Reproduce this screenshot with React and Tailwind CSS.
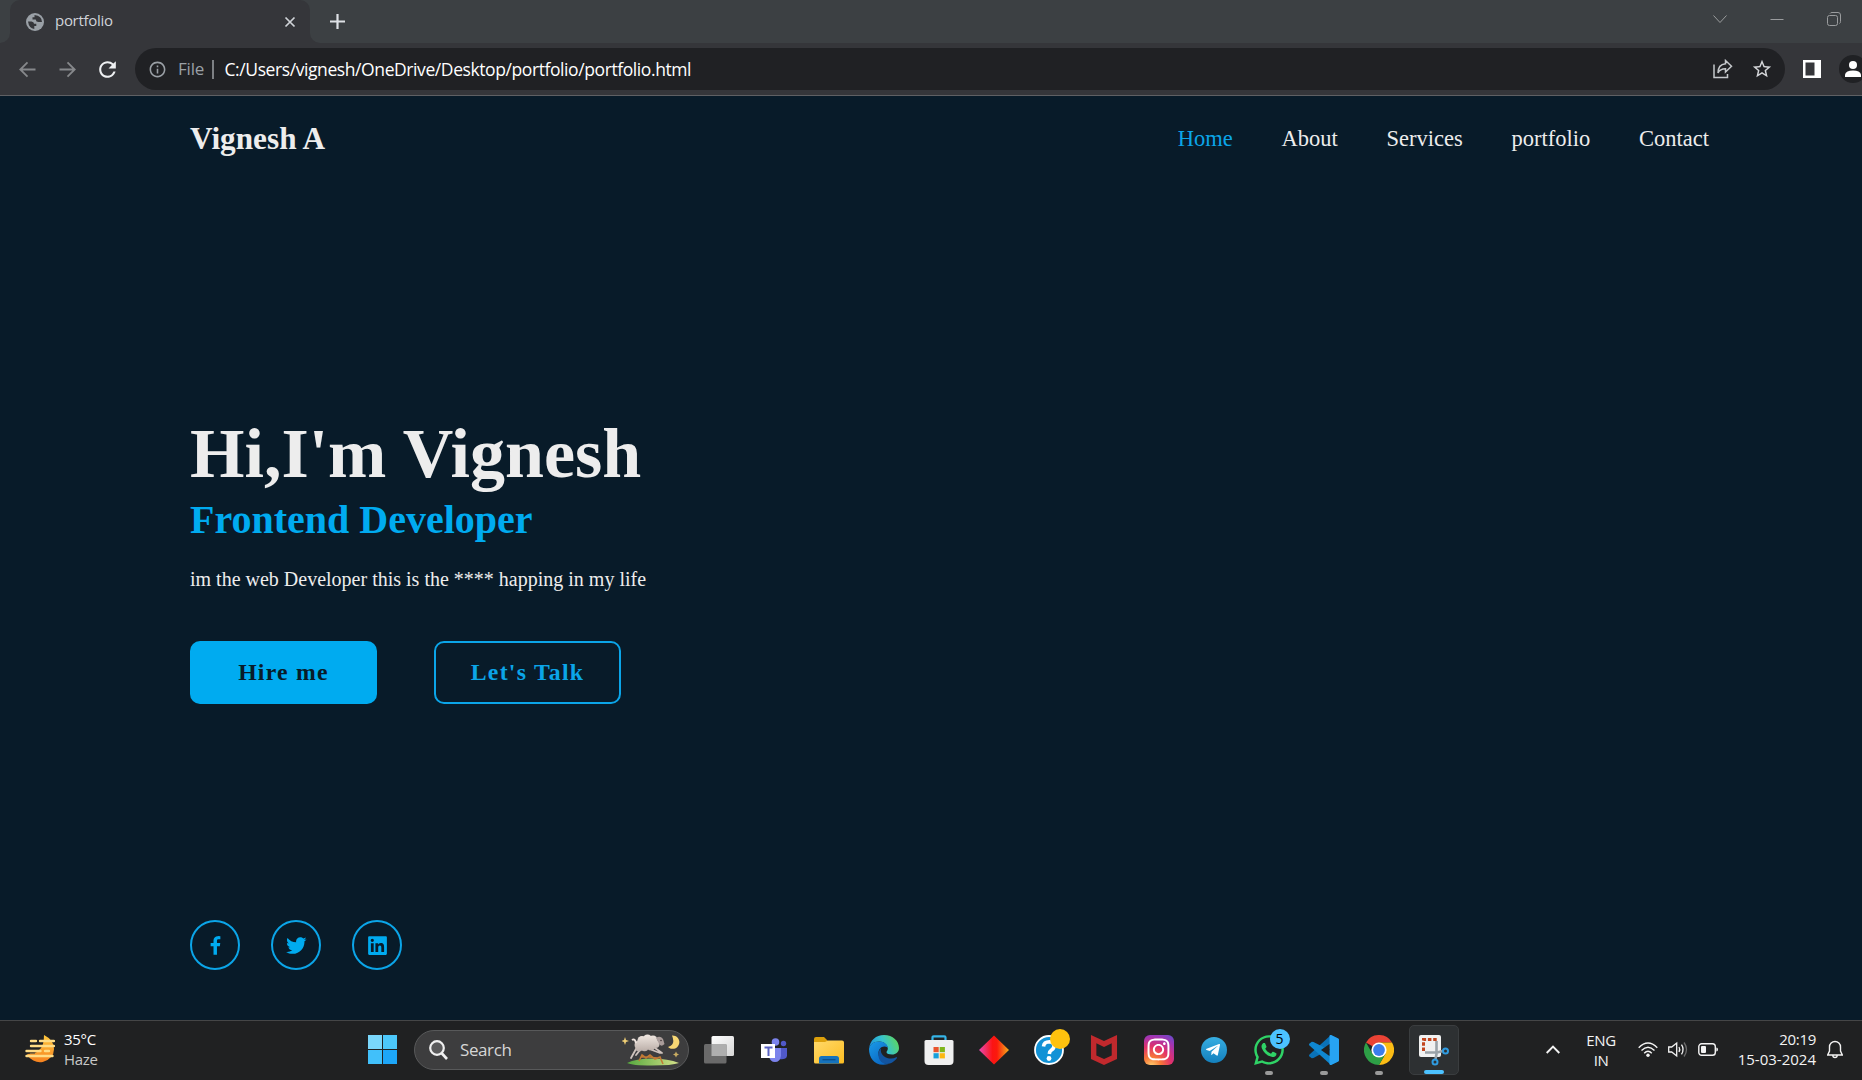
import React from "react";
import { BiLogoFacebook, BiLogoTwitter, BiLogoLinkedinSquare } from "react-icons/bi";
import { MdInfoOutline, MdRefresh, MdStarBorder } from "react-icons/md";
import { SiMcafee } from "react-icons/si";
import { FaInstagram, FaTelegramPlane, FaWhatsapp } from "react-icons/fa";

function Flare({ flip }) {
  return (
    <svg width="10" height="10" viewBox="0 0 10 10" className={flip ? "self-end -scale-x-100" : "self-end"}>
      <path d="M10 0V10H0A10 10 0 0 0 10 0Z" fill="#35363a" />
    </svg>
  );
}

function Globe() {
  return (
    <svg width="18" height="18" viewBox="0 0 18 18">
      <circle cx="9" cy="9" r="9" fill="#9aa0a6" />
      <path d="M2 8.500h3.500q2.500.2 2.500 2.300h2.300v2.200h-2v3Q3 15.500 2 8.500Z" fill="#35363a" />
      <path d="M8.500 2v2.200H6.500v2.300h3.200q.3 2.500 2.800 2.500h3.500Q16 3 8.500 2Z" fill="#35363a" />
    </svg>
  );
}

function TabStrip() {
  return (
    <div className="flex h-[43px] bg-[#3c4043]">
      <Flare />
      <div className="flex w-[300px] items-center rounded-t-[10px] bg-[#35363a] pr-[14px] pl-[16px]">
        <Globe />
        <span className="-mt-[2px] ml-[11px] text-[15px] tracking-[-0.3px] text-[#d0d3d8]">portfolio</span>
        <svg className="ml-auto" width="12" height="12" viewBox="0 0 12 12" stroke="#d0d3d8" strokeWidth="1.7">
          <path d="M1.5 1.5l9 9M10.5 1.5l-9 9" />
        </svg>
      </div>
      <Flare flip />
      <svg className="mt-[13px] ml-[9px]" width="17" height="17" viewBox="0 0 17 17" stroke="#dee1e6" strokeWidth="2.2">
        <path d="M8.5 1v15M1 8.5h15" />
      </svg>
      <div className="mr-[21px] ml-auto flex h-[37px] items-center gap-[43px]">
        <svg width="14" height="14" viewBox="0 0 14 14" fill="none" stroke="#9a9c9e">
          <path d="M0.5 3.5l6.5 7 6.5-7" />
        </svg>
        <svg width="14" height="14" viewBox="0 0 14 14" fill="none" stroke="#9a9c9e">
          <path d="M0.5 7.5h13" />
        </svg>
        <svg width="14" height="14" viewBox="0 0 14 14" fill="none" stroke="#9a9c9e">
          <rect x="0.5" y="3.5" width="10" height="10" rx="2" />
          <path d="M3 1.5Q3.500 .5 5 .5H11Q13.500 .5 13.500 3V9.500Q13.500 11 12.500 11.500" />
        </svg>
      </div>
    </div>
  );
}

function Toolbar() {
  return (
    <div className="flex h-[53px] items-center overflow-hidden border-b border-[#5f6063] bg-[#35363a]">
      <svg className="ml-[19px] shrink-0" width="17" height="17" viewBox="0 0 17 17" fill="none" stroke="#86888b" strokeWidth="1.8">
        <path d="M16.500 8.500H1.500M8.500 1.300L1.300 8.500l7.200 7.200" />
      </svg>
      <svg className="ml-[23px] shrink-0" width="17" height="17" viewBox="0 0 17 17" fill="none" stroke="#86888b" strokeWidth="1.8">
        <path d="M.5 8.500h15M8.500 1.300l7.200 7.200-7.200 7.200" />
      </svg>
      <MdRefresh className="ml-[19px] size-[25px] shrink-0 text-[#eef0f2]" />
      <div className="ml-[15px] flex h-[42px] w-[1650px] shrink-0 items-center rounded-full bg-[#202124]">
        <MdInfoOutline className="ml-[13px] size-[19px] text-[#9aa0a6]" />
        <span className="ml-[11px] w-[26px] text-[17px] tracking-[-0.2px] text-[#9aa0a6]">File</span>
        <div className="ml-[8px] h-[19px] w-[1.500px] bg-[#7d8084]" />
        <span className="ml-[11px] text-[17.500px] tracking-[-0.41px] whitespace-nowrap text-white">
          C:/Users/vignesh/OneDrive/Desktop/portfolio/portfolio.html
        </span>
        <svg className="ml-auto" width="20" height="20" viewBox="0 0 20 20" fill="none" stroke="#c4c7ca" strokeWidth="1.500">
          <path d="M1 5.500V18.500H14.500V15M12.500 1.500L18.500 7.200L12.500 13V9.800Q7 9.800 5 14Q5 5.500 12.500 4.800Z" />
        </svg>
        <MdStarBorder className="mr-[12px] ml-[18px] size-[22px] text-[#d5d7da]" />
      </div>
      <svg className="ml-[18px] shrink-0" width="18" height="18" viewBox="0 0 18 18">
        <path d="M0 0H18V18H0ZM2.500 2.500V15.500H11.500V2.500Z" fill="#fff" fillRule="evenodd" />
      </svg>
      <svg className="ml-[18px] shrink-0" width="28" height="28" viewBox="0 0 28 28">
        <circle cx="14" cy="14" r="14" fill="#202124" />
        <circle cx="14" cy="10" r="4" fill="#fff" />
        <path d="M6 22v-2.500q1-4 8-4t8 4V22Z" fill="#fff" />
      </svg>
    </div>
  );
}

const links = ["Home", "About", "Services", "portfolio", "Contact"];

function Social({ Icon }) {
  return (
    <a className="flex size-[50px] items-center justify-center rounded-full border-2 border-[#0ba5e8]">
      <Icon className="size-[25px] text-[#00abf0]" />
    </a>
  );
}

function Page() {
  return (
    <main className="flex h-[924px] flex-col bg-[#081b29] pr-[153px] pl-[190px] font-['Liberation_Serif',serif] text-[#ededed]">
      <header className="flex h-[86px] items-center justify-between">
        <span className="text-[31.250px] font-bold">Vignesh A</span>
        <nav className="flex gap-[48.750px] text-[22.500px]">
          {links.map((l, i) => (
            <a key={l} className={i === 0 ? "text-[#0ba5e8]" : ""}>{l}</a>
          ))}
        </nav>
      </header>
      <section className="mt-[229px]">
        <h1 className="text-[70px] leading-[85px] font-bold">Hi,I'm Vignesh</h1>
        <h2 className="mt-px text-[40px] leading-[46px] font-bold text-[#00abf0]">Frontend Developer</h2>
        <p className="mt-[21px] text-[20px] leading-[30px]">im the web Developer this is the **** happing in my life</p>
        <div className="mt-[47px] flex gap-[57px] text-[23.750px] font-bold tracking-[1.250px]">
          <a className="flex h-[63px] w-[187px] items-center justify-center rounded-[10px] bg-[#00abf0] text-[#081b29]">Hire me</a>
          <a className="flex h-[63px] w-[187px] items-center justify-center rounded-[10px] border-2 border-[#0ba5e8] text-[#0ba5e8]">Let's Talk</a>
        </div>
      </section>
      <div className="mt-auto mb-[50px] flex gap-[31px]">
        <Social Icon={BiLogoFacebook} />
        <Social Icon={BiLogoTwitter} />
        <Social Icon={BiLogoLinkedinSquare} />
      </div>
    </main>
  );
}

function Weather() {
  return (
    <svg width="30" height="30" viewBox="0 0 30 30">
      <defs>
        <linearGradient id="hz" x1="0" y1="0" x2="0" y2="1">
          <stop offset="0" stopColor="#ffc83d" />
          <stop offset="1" stopColor="#f58220" />
        </linearGradient>
      </defs>
      <path d="M19 1Q29 6 29 15A14 13 0 0 1 2 20Q15 20 18 10Q19 6 19 1Z" fill="url(#hz)" />
      <g stroke="#ffdc85" strokeWidth="2.400" strokeLinecap="round">
        <path d="M6 7h5M15 7h14M6 12h23M1.500 17h14M20 17h4M1.500 22h26" />
      </g>
      <path d="M5 19.300h5" stroke="#8a6a3a" strokeWidth="1.500" />
    </svg>
  );
}

function Sheep() {
  return (
    <svg width="58" height="32" viewBox="0 0 58 32">
      <defs>
        <linearGradient id="gr" x1="0" x2="1">
          <stop offset="0" stopColor="#56a83e" />
          <stop offset="1" stopColor="#d4e08a" />
        </linearGradient>
        <linearGradient id="wl" gradientUnits="userSpaceOnUse" x1="0" y1="1" x2="0" y2="19">
          <stop offset="0" stopColor="#efe6e0" />
          <stop offset="1" stopColor="#b5a8a2" />
        </linearGradient>
      </defs>
      <path d="M5 29Q14 24.500 30 24.500T57 29Q50 31.500 30 31.500T5 29Z" fill="url(#gr)" />
      <path d="M17 27l3-6 4 3 4-3 5 4 5-2 3 7M19 23l8 0 8 1" stroke="#c27a35" strokeWidth="1.600" fill="none" />
      <path d="M14 15l-5 9M18 16l-4 5M33 14l7 5M30 16l8 3" stroke="#cfc3bd" strokeWidth="1.800" strokeLinecap="round" />
      <g fill="url(#wl)">
        <circle cx="17" cy="11" r="4.500" /><circle cx="20" cy="6.500" r="4.500" /><circle cx="25.500" cy="5" r="4.500" />
        <circle cx="31" cy="6" r="4.500" /><circle cx="33.500" cy="10" r="4" /><circle cx="29" cy="12.500" r="4" />
        <circle cx="22.500" cy="13.300" r="4" /><circle cx="17" cy="14" r="3.500" /><circle cx="25" cy="9" r="5" />
      </g>
      <path d="M34 4q4-3 7 1l1.500 5q-3 3-5 .5Z" fill="#a99c9a" />
      <circle cx="39" cy="6.500" r=".8" fill="#40383a" />
      <path d="M10 6q3-2 4 3" stroke="#eee3dd" strokeWidth="2" fill="none" />
      <path d="M50 1.500a6.700 6.700 0 1 1-4 11.500q8-2 4-11.500Z" fill="#f7d774" />
      <path d="M3 3l1 3 3 1-3 1-1 3-1-3-3-1 3-1Z" fill="#f0cf75" />
      <path d="M54 17.500l1 2 2 1-2 1-1 2-1-2-2-1 2-1Z" fill="#c9ad62" />
    </svg>
  );
}

function TaskView() {
  return (
    <svg width="30" height="28" viewBox="0 0 30 28">
      <defs>
        <linearGradient id="tv" x1="0" y1="0" x2="1" y2="1">
          <stop offset="0" stopColor="#fff" /><stop offset="1" stopColor="#d6d6d6" />
        </linearGradient>
      </defs>
      <rect x="7.500" y="0" width="22.500" height="20" rx="1.500" fill="url(#tv)" />
      <rect x="0" y="8" width="22.500" height="19.500" rx="1.500" fill="#6a6a6a" />
      <path d="M7.500 8h15v12h-15Z" fill="#aeaeae" />
    </svg>
  );
}

function Teams() {
  return (
    <svg width="28" height="26" viewBox="0 0 28 26">
      <circle cx="23.500" cy="6.500" r="2.700" fill="#5059c9" />
      <path d="M19 11h8v8q-1 4-8 3Z" fill="#5059c9" />
      <circle cx="15.500" cy="5" r="3.800" fill="#7b83eb" />
      <path d="M9 11h12v8q-1 6-6 6t-6-6Z" fill="#7b83eb" />
      <rect x="1" y="7" width="14" height="14" fill="#fff" />
      <path d="M4.500 10.500h8M8.500 10.500v8.500" stroke="#5a62c3" strokeWidth="2" />
    </svg>
  );
}

function Folder() {
  return (
    <svg width="30" height="28" viewBox="0 0 30 28">
      <defs>
        <linearGradient id="fo" x1="0" y1="0" x2="1" y2="1">
          <stop offset="0" stopColor="#ffd96a" /><stop offset="1" stopColor="#fcbd22" />
        </linearGradient>
      </defs>
      <path d="M0 3q0-2 2-2h8l4 4H28V10H0Z" fill="#dca00b" />
      <path d="M0 6h11l3-1.500h14q2 0 2 2V26q0 1.500-1.500 1.500h-27Q0 27.500 0 26Z" fill="url(#fo)" />
      <path d="M5 27.500v-5q0-2.500 2.500-2.500h15q2.500 0 2.500 2.500v5Z" fill="#1673bd" />
      <path d="M8.500 23.700h13" stroke="#0b4f8c" strokeWidth="1.300" />
    </svg>
  );
}

function Edge() {
  return (
    <svg width="30" height="30" viewBox="0 0 30 30">
      <defs>
        <linearGradient id="e1" x1="0" y1=".6" x2="1" y2=".3">
          <stop offset="0" stopColor="#1b8fdc" /><stop offset=".5" stopColor="#36c2cf" /><stop offset="1" stopColor="#5fd85a" />
        </linearGradient>
        <linearGradient id="e2" x1="0" y1="0" x2=".7" y2="1">
          <stop offset="0" stopColor="#1a9be8" /><stop offset="1" stopColor="#0a66c2" />
        </linearGradient>
      </defs>
      <path d="M0 14C1 5 7 0 15 0c9 0 15 6 15 13 0 4-3 6.500-7 6.500-3 0-5.500-1-5.500-2.300 0-.8 1.300-1.500 1.300-3.700C18.800 10 15 6.500 10.500 6.500 4.500 6.500.500 10 0 14Z" fill="url(#e1)" />
      <path d="M0 14C.5 10 4 6.500 10.500 6.500c4.500 0 8 3 8.300 6-5-3-9 .500-9.300 5C9.300 24 14 29 19.500 29 7 32.500 0 24 0 14Z" fill="url(#e2)" />
      <path d="M12 13c-4 4-3.500 12 2 15 5 2.500 11-.5 14-5 .4-.7-.3-1-.8-.7-7 3.500-17-1-15.200-9.300Z" fill="#1254a0" />
    </svg>
  );
}

function Store() {
  return (
    <svg width="30" height="30" viewBox="0 0 30 30">
      <path d="M8.500 6V2.500q0-1.200 1.200-1.200h10.600q1.200 0 1.200 1.200V6" stroke="#35b5e8" strokeWidth="2.200" fill="none" />
      <path d="M.5 6.500q0-1.500 1.500-1.500h26q1.500 0 1.500 1.500V26q0 4-4 4h-21q-4 0-4-4Z" fill="#f0f0f0" />
      <rect x="9.500" y="12" width="5.200" height="5.200" fill="#e8542c" />
      <rect x="15.700" y="12" width="5.200" height="5.200" fill="#7fb51a" />
      <rect x="9.500" y="18.200" width="5.200" height="5.200" fill="#169fdb" />
      <rect x="15.700" y="18.200" width="5.200" height="5.200" fill="#fbb813" />
    </svg>
  );
}

function Kite() {
  return (
    <svg width="30" height="30" viewBox="0 0 30 30">
      <defs>
        <linearGradient id="ki" x1="0" x2="1">
          <stop offset="0" stopColor="#e64bb4" /><stop offset=".45" stopColor="#fb1414" /><stop offset=".6" stopColor="#fb1a0c" /><stop offset="1" stopColor="#f5b01c" />
        </linearGradient>
      </defs>
      <path d="M15 .5L30 15 15 29.500 0 15Z" fill="url(#ki)" />
    </svg>
  );
}

function Help() {
  return (
    <div className="relative">
      <svg width="30" height="30" viewBox="0 0 30 30">
        <circle cx="15" cy="15" r="14" fill="#1292d6" stroke="#fff" strokeWidth="1.800" />
        <path d="M9.500 11.500Q10 6.800 15.500 6.800 20 7 20 11q0 2.500-2.500 4-2 1.300-2.200 4" stroke="#fff" strokeWidth="3.600" fill="none" />
        <circle cx="15" cy="23.500" r="2.400" fill="#fff" />
      </svg>
      <span className="absolute -top-[6px] left-[16px] size-5 rounded-full bg-[#ffc20e]" />
    </div>
  );
}

function Insta() {
  return (
    <div className="flex size-[30px] items-center justify-center rounded-[6px] bg-[radial-gradient(circle_at_25%_105%,#fed373_0%,#f77737_25%,#e1306c_52%,#a035b4_78%,#5a50d0_100%)]">
      <FaInstagram className="size-[25px] text-white" />
    </div>
  );
}

function Telegram() {
  return (
    <div className="flex size-[26px] items-center justify-center rounded-full bg-[linear-gradient(#37aee2,#1480bd)]">
      <FaTelegramPlane className="mr-[2px] size-[16px] text-white" />
    </div>
  );
}

function WhatsApp() {
  return (
    <div className="relative">
      <FaWhatsapp className="size-[34px] text-[#2fd366]" />
      <span className="absolute -top-[4px] left-[18px] flex size-5 items-center justify-center rounded-full bg-[#4cc2ff] text-[14px] text-black">
        <span className="-mt-px">5</span>
      </span>
    </div>
  );
}

function VsCode() {
  return (
    <svg width="30" height="30" viewBox="0 0 30 30">
      <path d="M22 0L30 4V9L4.500 23 2.800 23.300.500 21.500Q-.5 20.500.5 19.500L22 0Z" fill="#0a72b8" />
      <path d="M22 30l8-4V20L4.500 7 2.800 6.800.500 8.500Q-.5 9.500.5 10.500Z" fill="#0f87d0" />
      <path d="M22 0l6.700 3.200Q30 4 30 5V25q0 1-1.300 1.800L22 30q-1.200.3-1.500-1V1Q20.800-.3 22 0Z" fill="#27a3f2" />
      <path d="M20.500 9L12 15l8.500 6Z" fill="#202020" />
    </svg>
  );
}

function Chrome() {
  return (
    <svg width="30" height="30" viewBox="0 0 30 30">
      <path d="M15 15L2 7.500A15 15 0 0 1 28 7.500H15Z" fill="#ea4335" />
      <path d="M15 7.500H28A15 15 0 0 1 15 30L21.500 18.700Z" fill="#fbbc15" />
      <path d="M2 7.500L8.500 18.700 15 22.500 21.500 18.700 15 30A15 15 0 0 1 2 7.500Z" fill="#2d9f46" />
      <circle cx="15" cy="15" r="7.600" fill="#fff" />
      <circle cx="15" cy="15" r="5.900" fill="#3b7ded" />
    </svg>
  );
}

function Snip() {
  return (
    <svg width="32" height="32" viewBox="0 0 32 32">
      <rect x="1" y="1" width="22" height="22" rx="2" fill="#f1f1f1" />
      <path d="M5.500 17V5.500H19" stroke="#c2451e" strokeWidth="3" strokeDasharray="3.500 1.800" fill="none" />
      <path d="M18.500 7v13l-1 5M7 18.500h12l6-1.500" stroke="#9aa2a8" strokeWidth="2.600" fill="none" />
      <circle cx="27.500" cy="17" r="2.500" stroke="#2f9be0" strokeWidth="2" fill="none" />
      <circle cx="17" cy="28" r="2.500" stroke="#2f9be0" strokeWidth="2" fill="none" />
    </svg>
  );
}

const apps = [
  { C: TaskView }, { C: Teams }, { C: Folder }, { C: Edge }, { C: Store }, { C: Kite }, { C: Help },
  { C: () => <SiMcafee className="size-[30px] text-[#c1292d]" /> },
  { C: Insta }, { C: Telegram },
  { C: WhatsApp, run: true }, { C: VsCode, run: true }, { C: Chrome, run: true },
];

function Taskbar() {
  return (
    <footer className="flex h-[60px] items-center border-t border-[#454647] bg-[#202122] pb-[2px] text-[#f3f3f3]">
      <div className="flex w-[368px] items-center pl-[25px]">
        <div className="-mt-[2px]"><Weather /></div>
        <div className="-mt-px ml-[9px] text-[15px] leading-5 tracking-[-0.3px]">
          <div className="text-white">35°C</div>
          <div className="text-[#c8c8c8]">Haze</div>
        </div>
      </div>
      <div className="grid size-[29px] grid-cols-2 gap-px">
        <span className="bg-[#7ad7fb]" /><span className="bg-[#4cc8fb]" />
        <span className="bg-[#41c0fa]" /><span className="bg-[#1da6f8]" />
      </div>
      <div className="ml-[17px] flex h-10 w-[275px] items-center rounded-full border border-[#58595a] bg-[#3d3d3e] pr-[8px] pl-[14px]">
        <svg width="19" height="20" viewBox="0 0 19 20" fill="none" stroke="#f0f0f0" strokeWidth="2.200">
          <circle cx="8" cy="8" r="6.800" fill="#5a5a5b" />
          <path d="M12.500 13l5.500 6" strokeWidth="2.600" />
        </svg>
        <span className="ml-[12px] text-[17px] tracking-[-0.4px] text-[#d6d6d6]">Search</span>
        <div className="ml-auto"><Sheep /></div>
      </div>
      <div className="ml-[2px] flex">
        {apps.map(({ C, run }, i) => (
          <div key={i} className="relative flex h-[50px] w-[55px] items-center justify-center">
            <C />
            {run && <span className="absolute bottom-0 h-1 w-2 rounded-full bg-[#9a9a9a]" />}
          </div>
        ))}
        <div className="relative ml-[3px] flex h-[50px] w-[50px] items-center justify-center rounded-[5px] border border-[#3a3d3f] bg-[#2d3032]">
          <Snip />
          <span className="absolute bottom-0 h-1 w-5 rounded-full bg-[#4cc2ff]" />
        </div>
      </div>
      <svg className="ml-[87px]" width="14" height="9" viewBox="0 0 14 9" fill="none" stroke="#f3f3f3" strokeWidth="1.900">
        <path d="M.7 8L7 1.500 13.300 8" />
      </svg>
      <div className="ml-[20px] w-[42px] text-center text-[15px] leading-5 tracking-[-0.4px]">
        <div>ENG</div>
        <div>IN</div>
      </div>
      <svg className="ml-[16px]" width="20" height="16" viewBox="0 0 20 16" fill="none" stroke="#f3f3f3" strokeWidth="1.400">
        <path d="M.7 5.700Q10-3.500 19.300 5.700M3.500 8.600Q10 2 16.500 8.600M6.200 11.300Q10 7.300 13.800 11.300" />
        <circle cx="10" cy="13.200" r="1.700" fill="#f3f3f3" stroke="none" />
      </svg>
      <svg className="ml-[10px]" width="20" height="17" viewBox="0 0 20 17" fill="none" stroke="#f3f3f3" strokeWidth="1.300">
        <path d="M.7 6v5h3l5 4V2l-5 4ZM11 6q1.500 2.500 0 5M13.500 3.700q3.200 4.800 0 9.600" />
        <path d="M16 1.500q5 7 0 14" stroke="#6c6c6c" />
      </svg>
      <svg className="ml-[10px]" width="21" height="14" viewBox="0 0 21 14">
        <rect x=".8" y=".8" width="16.500" height="11.500" rx="2.800" fill="none" stroke="#f3f3f3" strokeWidth="1.400" />
        <rect x="3" y="3" width="5" height="7" rx="1" fill="#f3f3f3" />
        <path d="M18.300 4.500q1.700 0 1.700 2t-1.700 2Z" fill="#f3f3f3" />
      </svg>
      <div className="-mt-px ml-[15px] w-[82px] text-right text-[15px] leading-5 whitespace-nowrap">
        <div className="tracking-[-0.3px]">20:19</div>
        <div>15-03-2024</div>
      </div>
      <svg className="ml-[11px] shrink-0" width="16" height="19" viewBox="0 0 16 19" fill="none" stroke="#f3f3f3" strokeWidth="1.400">
        <path d="M2.500 7a5.500 5.500 0 0 1 11 0v4l1.800 4H.7l1.800-4ZM5.800 15.300a2.200 2.200 0 0 0 4.400 0" />
      </svg>
    </footer>
  );
}

export default function App() {
  return (
    <div className="h-[1080px] w-[1862px] overflow-hidden font-['Open_Sans','Noto_Sans',sans-serif]">
      <TabStrip />
      <Toolbar />
      <Page />
      <Taskbar />
    </div>
  );
}
